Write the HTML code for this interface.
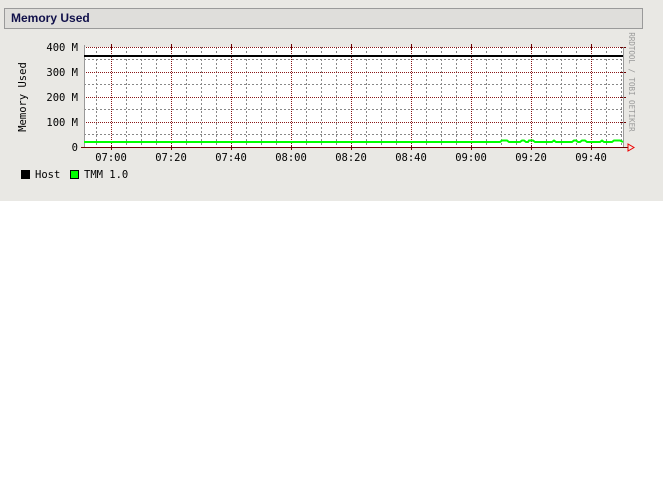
<!DOCTYPE html>
<html><head><style>
html,body{margin:0;padding:0;background:#fff;width:663px;height:495px;overflow:hidden}
#bg{position:absolute;left:0;top:0;width:663px;height:201px;background:#e9e8e4}
#hd{position:absolute;left:4px;top:8px;height:19px;border:1px solid #9a9a9a;background:#dfdedb;font:bold 12px "Liberation Sans",sans-serif;color:#10104a;line-height:19px;padding-left:6px;width:631px}
svg{position:absolute;left:0;top:0}
text{font-family:"DejaVu Sans Mono","Liberation Mono",monospace;font-size:10.5px}
</style></head><body>
<div id="bg"></div>
<div id="hd">Memory Used</div>
<svg width="663" height="201">
<rect x="84" y="47" width="539" height="100" fill="#fff"/>
<g stroke="#888" stroke-width="1" stroke-dasharray="2,2">
<path d="M84 59.5H623M84 84.5H623M84 109.5H623M84 134.5H623"/>
<path d="M96.5 47V147M126.5 47V147M141.5 47V147M156.5 47V147M186.5 47V147M201.5 47V147M216.5 47V147M246.5 47V147M261.5 47V147M276.5 47V147M306.5 47V147M321.5 47V147M336.5 47V147M366.5 47V147M381.5 47V147M396.5 47V147M426.5 47V147M441.5 47V147M456.5 47V147M486.5 47V147M501.5 47V147M516.5 47V147M546.5 47V147M561.5 47V147M576.5 47V147M606.5 47V147M621.5 47V147"/>
</g>
<g stroke="#8b1a1a" stroke-width="1" stroke-dasharray="1,1">
<path d="M84 47.5H623M84 72.5H623M84 97.5H623M84 122.5H623"/>
<path d="M111.5 47V147M171.5 47V147M231.5 47V147M291.5 47V147M351.5 47V147M411.5 47V147M471.5 47V147M531.5 47V147M591.5 47V147"/>
</g>
<g stroke="#6b0000" stroke-width="1">
<path d="M111.5 44V50M171.5 44V50M231.5 44V50M291.5 44V50M351.5 44V50M411.5 44V50M471.5 44V50M531.5 44V50M591.5 44V50"/>
<path d="M620 72.5H626M620 97.5H626M620 122.5H626M620 47.5H626"/>
<path d="M81 147.5H628"/>
<path d="M111.5 145V150M171.5 145V150M231.5 145V150M291.5 145V150M351.5 145V150M411.5 145V150M471.5 145V150M531.5 145V150M591.5 145V150"/>
</g>
<path d="M84.5 45V147M623.5 47V147" stroke="#999"/>
<path d="M628 144V151L634 147.5Z" fill="none" stroke="#e00"/>
<path d="M84 56H623" stroke="#000" stroke-width="2"/>
<path d="M84 142H500L502 140.5H507L509 142H520L522 140.5H524L526 142H528L529 140.5H533L535 142H552L554 140.5L556 142H572L574 140.5H576L578 142H580L582 140.5H585L587 142H600L602 140.5L604 142H612L614 140.5H620L623 142" stroke="#00ff00" stroke-width="2" fill="none"/>
<g text-anchor="end" fill="#000">
<text x="78" y="51">400 M</text>
<text x="78" y="76">300 M</text>
<text x="78" y="101">200 M</text>
<text x="78" y="126">100 M</text>
<text x="78" y="151">0</text>
</g>
<text transform="translate(26,97) rotate(-90)" text-anchor="middle">Memory Used</text>
<text transform="translate(629,82) rotate(90)" text-anchor="middle" fill="#999" style="font-size:7.5px">RRDTOOL / TOBI OETIKER</text>
<g text-anchor="middle" fill="#000">
<text x="111" y="161">07:00</text><text x="171" y="161">07:20</text><text x="231" y="161">07:40</text>
<text x="291" y="161">08:00</text><text x="351" y="161">08:20</text><text x="411" y="161">08:40</text>
<text x="471" y="161">09:00</text><text x="531" y="161">09:20</text><text x="591" y="161">09:40</text>
</g>
<rect x="21.5" y="170.5" width="8" height="8" fill="#000" stroke="#000"/>
<text x="35" y="178">Host</text>
<rect x="70.5" y="170.5" width="8" height="8" fill="#00ff00" stroke="#000"/>
<text x="84" y="178">TMM 1.0</text>
</svg>
</body></html>
